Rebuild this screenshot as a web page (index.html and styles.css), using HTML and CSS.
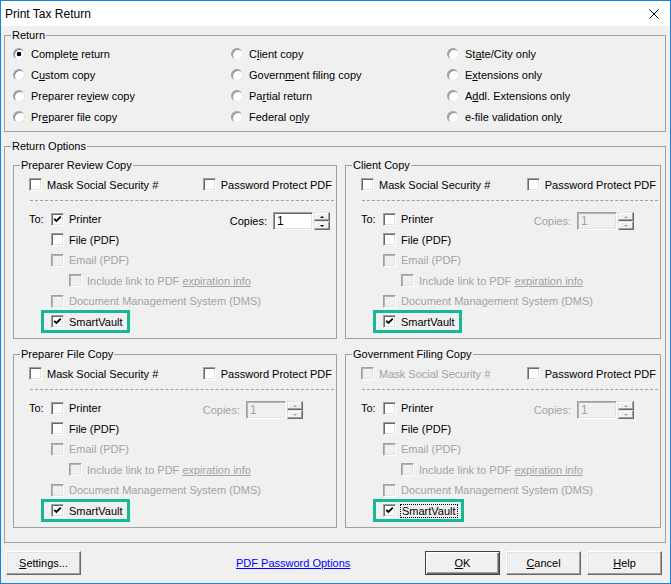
FILE: index.html
```html
<!DOCTYPE html>
<html lang="en">
<head>
    <meta charset="UTF-8">
    <title>Print Tax Return</title>
    <link rel="stylesheet" href="styles.css">
</head>
<body>
<div class="window">
    <!-- Title bar -->
    <div class="titlebar">
        <span>Print Tax Return</span>
        <svg class="close" viewBox="0 0 10 10"><path d="M0.5 0.5L9.5 9.5M9.5 0.5L0.5 9.5"/></svg>
    </div>

    <div class="content">
        <!-- Return -->
        <fieldset class="group return-group">
            <legend>Return</legend>
            <div class="radio-grid">
                <label class="radio"><span class="dot on"></span><span>Complet<u>e</u> return</span></label>
                <label class="radio"><span class="dot"></span><span>C<u>u</u>stom copy</span></label>
                <label class="radio"><span class="dot"></span><span>Preparer re<u>v</u>iew copy</span></label>
                <label class="radio"><span class="dot"></span><span>Pr<u>e</u>parer file copy</span></label>
                <label class="radio"><span class="dot"></span><span>C<u>l</u>ient copy</span></label>
                <label class="radio"><span class="dot"></span><span>Govern<u>m</u>ent filing copy</span></label>
                <label class="radio"><span class="dot"></span><span>Pa<u>r</u>tial return</span></label>
                <label class="radio"><span class="dot"></span><span>Federal o<u>n</u>ly</span></label>
                <label class="radio"><span class="dot"></span><span>St<u>a</u>te/City only</span></label>
                <label class="radio"><span class="dot"></span><span>E<u>x</u>tensions only</span></label>
                <label class="radio"><span class="dot"></span><span>A<u>d</u>dl. Extensions only</span></label>
                <label class="radio"><span class="dot"></span><span>e-file validation onl<u>y</u></span></label>
            </div>
        </fieldset>

        <!-- Return Options -->
        <fieldset class="group options-group">
            <legend>Return Options</legend>
            <div class="copies-grid">

                <fieldset class="group copy copy-review">
                    <legend>Preparer Review Copy</legend>
                    <div class="copy-top">
                        <label class="check"><span class="box"></span><span>Mask Social Security #</span></label>
                        <label class="check"><span class="box"></span><span>Password Protect PDF</span></label>
                    </div>
                    <div class="sep"></div>
                    <div class="dest">
                        <div class="dest-row">
                            <span class="to">To:</span>
                            <label class="check"><span class="box"><svg viewBox="0 0 9 9"><path d="M1.2 3.8L3.4 6L7.8 1.6"/></svg></span><span>Printer</span></label>
                            <div class="copies">
                                <span>Copies:</span>
                                <span class="field">1</span>
                                <span class="spin"><span class="up"></span><span class="down"></span></span>
                            </div>
                        </div>
                        <label class="check item"><span class="box"></span><span>File (PDF)</span></label>
                        <label class="check item off"><span class="box"></span><span>Email (PDF)</span></label>
                        <label class="check item sub off"><span class="box"></span><span>Include link to PDF <u>expiration info</u></span></label>
                        <label class="check item off"><span class="box"></span><span>Document Management System (DMS)</span></label>
                        <label class="check item mark"><span class="box"><svg viewBox="0 0 9 9"><path d="M1.2 3.8L3.4 6L7.8 1.6"/></svg></span><span>SmartVault</span></label>
                    </div>
                </fieldset>

                <fieldset class="group copy copy-client">
                    <legend>Client Copy</legend>
                    <div class="copy-top">
                        <label class="check"><span class="box"></span><span>Mask Social Security #</span></label>
                        <label class="check"><span class="box"></span><span>Password Protect PDF</span></label>
                    </div>
                    <div class="sep"></div>
                    <div class="dest">
                        <div class="dest-row">
                            <span class="to">To:</span>
                            <label class="check"><span class="box"></span><span>Printer</span></label>
                            <div class="copies off">
                                <span>Copies:</span>
                                <span class="field">1</span>
                                <span class="spin"><span class="up"></span><span class="down"></span></span>
                            </div>
                        </div>
                        <label class="check item"><span class="box"></span><span>File (PDF)</span></label>
                        <label class="check item off"><span class="box"></span><span>Email (PDF)</span></label>
                        <label class="check item sub off"><span class="box"></span><span>Include link to PDF <u>expiration info</u></span></label>
                        <label class="check item off"><span class="box"></span><span>Document Management System (DMS)</span></label>
                        <label class="check item mark"><span class="box"><svg viewBox="0 0 9 9"><path d="M1.2 3.8L3.4 6L7.8 1.6"/></svg></span><span>SmartVault</span></label>
                    </div>
                </fieldset>

                <fieldset class="group copy copy-file">
                    <legend>Preparer File Copy</legend>
                    <div class="copy-top">
                        <label class="check"><span class="box"></span><span>Mask Social Security #</span></label>
                        <label class="check"><span class="box"></span><span>Password Protect PDF</span></label>
                    </div>
                    <div class="sep"></div>
                    <div class="dest">
                        <div class="dest-row">
                            <span class="to">To:</span>
                            <label class="check"><span class="box"></span><span>Printer</span></label>
                            <div class="copies off">
                                <span>Copies:</span>
                                <span class="field">1</span>
                                <span class="spin"><span class="up"></span><span class="down"></span></span>
                            </div>
                        </div>
                        <label class="check item"><span class="box"></span><span>File (PDF)</span></label>
                        <label class="check item off"><span class="box"></span><span>Email (PDF)</span></label>
                        <label class="check item sub off"><span class="box"></span><span>Include link to PDF <u>expiration info</u></span></label>
                        <label class="check item off"><span class="box"></span><span>Document Management System (DMS)</span></label>
                        <label class="check item mark"><span class="box"><svg viewBox="0 0 9 9"><path d="M1.2 3.8L3.4 6L7.8 1.6"/></svg></span><span>SmartVault</span></label>
                    </div>
                </fieldset>

                <fieldset class="group copy copy-gov">
                    <legend>Government Filing Copy</legend>
                    <div class="copy-top">
                        <label class="check off"><span class="box"></span><span>Mask Social Security #</span></label>
                        <label class="check"><span class="box"></span><span>Password Protect PDF</span></label>
                    </div>
                    <div class="sep"></div>
                    <div class="dest">
                        <div class="dest-row">
                            <span class="to">To:</span>
                            <label class="check"><span class="box"></span><span>Printer</span></label>
                            <div class="copies off">
                                <span>Copies:</span>
                                <span class="field">1</span>
                                <span class="spin"><span class="up"></span><span class="down"></span></span>
                            </div>
                        </div>
                        <label class="check item"><span class="box"></span><span>File (PDF)</span></label>
                        <label class="check item off"><span class="box"></span><span>Email (PDF)</span></label>
                        <label class="check item sub off"><span class="box"></span><span>Include link to PDF <u>expiration info</u></span></label>
                        <label class="check item off"><span class="box"></span><span>Document Management System (DMS)</span></label>
                        <label class="check item mark"><span class="box"><svg viewBox="0 0 9 9"><path d="M1.2 3.8L3.4 6L7.8 1.6"/></svg></span><span class="focus">SmartVault</span></label>
                    </div>
                </fieldset>

            </div>
        </fieldset>
    </div>

    <!-- Buttons -->
    <div class="footer">
        <button class="btn"><u>S</u>ettings...</button>
        <a class="link" href="#">PDF Password Options</a>
        <div class="actions">
            <button class="btn default"><u>O</u>K</button>
            <button class="btn"><u>C</u>ancel</button>
            <button class="btn"><u>H</u>elp</button>
        </div>
    </div>
</div>
</body>
</html>
```

FILE: styles.css
```css
/* Base */
* { box-sizing: border-box; }
body {
    margin: 0;
    background: #f0f0f0;
    font-family: "Liberation Sans", Arial, sans-serif;
    font-size: 11px;
    color: #000;
}
.window {
    width: 671px;
    height: 584px;
    border: 1px solid #1883d7;
    background: #f0f0f0;
    display: flex;
    flex-direction: column;
}

/* Title bar */
.titlebar {
    height: 25px;
    flex: none;
    background: #fff;
    display: flex;
    align-items: center;
    justify-content: space-between;
    padding: 0 11px 0 4px;
    font-size: 12px;
}
.close { width: 10px; height: 10px; }
.close path { stroke: #000; stroke-width: 1; fill: none; }

.content { padding: 0 4px 0 3px; }

/* Group boxes (padding-left stays 0 so the legend sits near the corner) */
.group {
    margin: 0;
    padding: 0;
    min-width: 0;
    border: 1px solid #a0a0a0;
}
.group > legend {
    margin-left: 6px;
    padding: 0 1px;
    line-height: 13px;
}

/* Return */
.return-group { margin-top: 3px; padding-bottom: 4px; }
.radio-grid {
    margin: 1px 0 0 8px;
    display: grid;
    grid-template-columns: 218px 216px 1fr;
    grid-template-rows: repeat(4, 21px);
    grid-auto-flow: column;
}
.radio {
    display: flex;
    align-items: center;
    gap: 6px;
}
.dot {
    width: 12px;
    height: 12px;
    flex: none;
    border-radius: 50%;
    background: #fff;
    border: 1px solid;
    border-color: #a0a0a0 #e8e8e8 #e8e8e8 #a0a0a0;
    box-shadow: inset 1px 1px 0 #8a8a8a;
}
.dot.on { background: radial-gradient(circle, #000 0 2px, #fff 2.6px); }

/* Return Options */
.options-group { margin-top: 8px; padding: 6px 4px 14px 0; }
.copies-grid {
    margin-left: 8px;
    display: grid;
    grid-template-columns: 324px 1fr;
    gap: 9px 8px;
}
.copy { padding: 0 4px 6px 0; }
.copy > div { margin-left: 15px; }
.copy-top {
    margin-top: 5px;
    height: 15px;
    display: flex;
    justify-content: space-between;
    align-items: center;
}
.copy > .sep {
    margin: 8px -2px 0 16px;
    border-top: 1px dashed #a0a0a0;
}
.dest {
    margin-top: 8px;
    display: flex;
    flex-direction: column;
    align-items: flex-start;
}
.dest > * { height: 20.5px; }
.dest-row {
    align-self: stretch;
    display: flex;
    align-items: center;
}
.to { width: 22px; }
.item { margin-left: 22px; }
.item.sub { margin-left: 40px; }

/* Checkboxes */
.check {
    display: flex;
    align-items: center;
    gap: 5px;
    white-space: nowrap;
}
.box {
    width: 13px;
    height: 13px;
    flex: none;
    display: flex;
    align-items: center;
    justify-content: center;
    background: #fff;
    border: 1px solid;
    border-color: #a0a0a0 #fff #fff #a0a0a0;
    box-shadow: inset 1px 1px 0 #696969, inset -1px -1px 0 #e3e3e3;
}
.box svg { width: 9px; height: 9px; }
.box path { fill: none; stroke: #000; stroke-width: 1.9; }
.off { color: #a3a3a3; }
.off .box { background: #f0f0f0; box-shadow: inset 1px 1px 0 #b4b4b4, inset -1px -1px 0 #e3e3e3; }

/* SmartVault highlight */
.mark { position: relative; }
.mark::after {
    content: "";
    position: absolute;
    left: -10px;
    right: -7px;
    top: -2px;
    bottom: -1px;
    border: 3px solid #17b897;
}
.focus { outline: 1px dotted #000; outline-offset: 0; padding: 0 1px; }

/* Copies spinner */
.copies {
    margin-left: auto;
    margin-right: 22px;
    margin-top: 4px;
    display: flex;
    align-items: center;
}
.copy-review .copies { margin-right: 2px; }
.copy-file .copies { margin-right: 29px; }
.copies > span:first-child { margin-right: 6px; }
.field {
    width: 40px;
    height: 18px;
    padding-left: 3px;
    font-size: 12px;
    line-height: 16px;
    background: #fff;
    border: 1px solid;
    border-color: #a0a0a0 #fff #fff #a0a0a0;
    box-shadow: inset 1px 1px 0 #696969, inset -1px -1px 0 #e3e3e3;
}
.spin {
    margin-left: 1px;
    width: 16px;
    height: 18px;
    display: flex;
    flex-direction: column;
}
.spin > span {
    flex: 1;
    display: flex;
    align-items: center;
    justify-content: center;
    background: #f0f0f0;
    border: 1px solid;
    border-color: #e3e3e3 #696969 #696969 #e3e3e3;
    box-shadow: inset -1px -1px 0 #a0a0a0, inset 1px 1px 0 #fff;
}
.spin .up::before,
.spin .down::before {
    content: "";
    border-left: 2px solid transparent;
    border-right: 2px solid transparent;
}
.spin .up::before { border-bottom: 2px solid #000; }
.spin .down::before { border-top: 2px solid #000; }
.copies.off .field { background: #f0f0f0; box-shadow: inset 1px 1px 0 #b4b4b4, inset -1px -1px 0 #e3e3e3; }
.copies.off .up::before { border-bottom-color: #a3a3a3; }
.copies.off .down::before { border-top-color: #a3a3a3; }

/* Footer */
.footer {
    margin-top: 8px;
    padding: 0 8px 0 5px;
    display: flex;
    align-items: center;
}
.btn {
    width: 75px;
    height: 24px;
    padding: 0;
    font: inherit;
    color: #000;
    background: #f0f0f0;
    border: 1px solid;
    border-color: #fff #696969 #696969 #fff;
    box-shadow: inset -1px -1px 0 #a0a0a0, inset 1px 1px 0 #e3e3e3;
}
.btn.default {
    border-color: #404040;
    box-shadow: inset 1px 1px 0 #fff, inset -1px -1px 0 #696969, inset -2px -2px 0 #a0a0a0;
}
.link {
    margin-left: 155px;
    color: #0000ff;
    text-decoration: underline;
}
.actions {
    margin-left: auto;
    display: flex;
    gap: 6px;
}
```
